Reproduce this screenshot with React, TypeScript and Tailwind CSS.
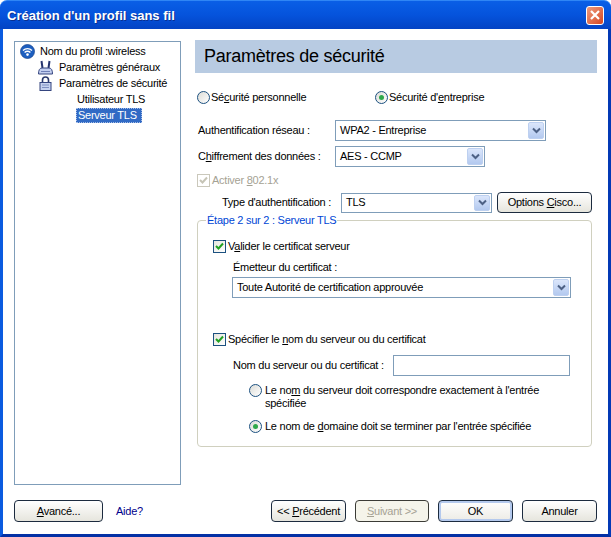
import type { ReactNode } from "react";

function Radio({ on }: { on?: boolean }) {
  return (
    <span className="w-[13px] h-[13px] shrink-0 rounded-full border border-[#1c5180] bg-gradient-to-br from-[#dcdcd7] to-white flex items-center justify-center">
      {on && <span className="w-[5px] h-[5px] rounded-full bg-[#2fa84a]" />}
    </span>
  );
}

function Check({ disabled }: { disabled?: boolean }) {
  return (
    <span className={`w-[13px] h-[13px] shrink-0 border flex items-center justify-center ${disabled ? "border-[#cac8bb] bg-white" : "border-[#1c5180] bg-gradient-to-br from-[#e6e6de] to-white"}`}>
      <svg width="9" height="9" viewBox="0 0 9 9">
        <path d="M1 4 L3.5 6.5 L8 1.5" fill="none" stroke={disabled ? "#c6c4b6" : "#21a121"} strokeWidth="2" />
      </svg>
    </span>
  );
}

function Select({ value, className }: { value: string; className: string }) {
  return (
    <div className={`flex items-center justify-between border border-[#7f9db9] bg-white pl-[3px] pr-[1px] ${className}`}>
      <span className="pl-[1px]">{value}</span>
      <span className="w-[16px] h-[calc(100%-2px)] rounded-[2px] border border-[#bdd0f0] bg-gradient-to-b from-[#dbe6fb] to-[#b3c9ef] flex items-center justify-center">
        <svg width="9" height="7" viewBox="0 0 9 7">
          <path d="M1 1.5 L4.5 5 L8 1.5" fill="none" stroke="#4d6185" strokeWidth="2" />
        </svg>
      </span>
    </div>
  );
}

function Btn({ children, className, state }: { children: ReactNode; className: string; state?: "off" | "def" }) {
  const look =
    state === "off"
      ? "text-[#a5a294] bg-[#f5f4ea] border-[#3b3b36]"
      : state === "def"
        ? "border-[#1c2b3f] bg-gradient-to-b from-white to-[#ecebe5] shadow-[inset_0_0_0_2px_#b4c9ed]"
        : "border-[#1c2b3f] bg-gradient-to-b from-white to-[#e6e5dd]";
  return <div className={`flex items-center justify-center rounded-[4px] border ${look} ${className}`}>{children}</div>;
}

function WifiIcon() {
  return (
    <svg width="15" height="15" viewBox="0 0 15 15" className="shrink-0">
      <circle cx="7.5" cy="7.5" r="7" fill="#1d5fc0" stroke="#123f8a" strokeWidth="0.7" />
      <path d="M3 6.5 A6.5 6.5 0 0 1 12 6.5 M4.6 8.5 A4 4 0 0 1 10.4 8.5" fill="none" stroke="#fff" strokeWidth="1.3" />
      <circle cx="7.5" cy="10.6" r="1.3" fill="#fff" />
    </svg>
  );
}

function RouterIcon() {
  return (
    <svg width="15" height="15" viewBox="0 0 15 15" className="shrink-0">
      <path d="M3.5 1 L4.5 8 M11.5 1 L10.5 8" stroke="#26346e" strokeWidth="2" />
      <path d="M0.5 14 Q0.5 8 4 8 H11 Q14.5 8 14.5 14 Z" fill="#c3cff0" stroke="#35457f" />
      <path d="M3 11.5 H12" stroke="#6f80b8" />
    </svg>
  );
}

function LockIcon() {
  return (
    <svg width="13" height="15" viewBox="0 0 13 15" className="shrink-0">
      <path d="M3.5 7 V4 Q3.5 1 6.5 1 Q9.5 1 9.5 4 V7" fill="none" stroke="#2b3a6e" strokeWidth="1.6" />
      <rect x="1" y="6.5" width="11" height="8" fill="#c6d2ee" stroke="#35457f" />
      <path d="M3 9 H10 M3 11.5 H10" stroke="#7e8fc0" />
    </svg>
  );
}

export default function App() {
  return (
    <div className="w-[611px] h-[537px] flex flex-col overflow-hidden whitespace-nowrap bg-white text-[11px] leading-[13px] tracking-[-0.25px] text-black font-['Liberation_Sans',sans-serif]">
      {/* Title bar */}
      <div className="h-[29px] shrink-0 rounded-t-[7px] border-t border-[#2f86f5] bg-gradient-to-b from-[#0a5fe6] via-[#0553dc] to-[#0343c4] flex items-center justify-between pl-[7px] pr-[7px]">
        <span className="text-white font-bold text-[13px] tracking-normal [text-shadow:1px_1px_0_#0a2f90]">Création d'un profil sans fil</span>
        <span className="w-[18px] h-[19px] rounded-[3px] border border-white bg-gradient-to-br from-[#ec9a7c] to-[#d5431c] flex items-center justify-center">
          <svg width="12" height="12" viewBox="0 0 12 12">
            <path d="M2 2 L10 10 M10 2 L2 10" stroke="#fff" strokeWidth="2.2" />
          </svg>
        </span>
      </div>

      {/* Window body */}
      <div className="flex-1 min-h-0 flex flex-col border-x-[3px] border-b-[3px] border-l-[#0a5be0] border-r-[#0339b5] border-b-[#0330a5] pl-[11px] pr-[11px]">
        <div className="flex gap-[14px] pt-[12px]">
          {/* Tree */}
          <div className="w-[167px] h-[444px] border border-[#7f9db9] pt-[1px] pl-[5px]">
            <div className="h-[16px] flex items-center gap-[5px]">
              <WifiIcon />
              <span>Nom du profil :wireless</span>
            </div>
            <div className="h-[16px] flex items-center gap-[6px] pl-[18px]">
              <RouterIcon />
              <span>Paramètres généraux</span>
            </div>
            <div className="h-[16px] flex items-center gap-[7px] pl-[19px]">
              <LockIcon />
              <span>Paramètres de sécurité</span>
            </div>
            <div className="h-[16px] flex items-center pl-[57px]">Utilisateur TLS</div>
            <div className="h-[16px] flex items-center pl-[56px]">
              <span className="px-[1px] h-[15px] w-[66px] bg-[#316ac5] text-white border border-dotted border-[#a9bfe6] flex items-center">Serveur TLS</span>
            </div>
          </div>

          {/* Right pane */}
          <div className="w-[402px] -mt-[1px]">
            <div className="h-[33px] bg-[#b8cbe2] flex items-center pl-[9px] text-[18px] tracking-[-0.25px]">Paramètres de sécurité</div>

            <div className="flex mt-[17px] h-[14px] items-center pl-[2px]">
              <div className="w-[178px] flex items-center gap-[1px]">
                <Radio />
                <span>Sé<u>c</u>urité personnelle</span>
              </div>
              <div className="flex items-center gap-[1px]">
                <Radio on />
                <span>Sécurité d'<u>e</u>ntreprise</span>
              </div>
            </div>

            <div className="flex items-center mt-[16px] pl-[3px]">
              <span className="w-[137px]">Authentification réseau :</span>
              <Select value="WPA2 - Entreprise" className="w-[211px] h-[21px]" />
            </div>
            <div className="flex items-center mt-[5px] pl-[3px]">
              <span className="w-[137px]">C<u>h</u>iffrement des données :</span>
              <Select value="AES - CCMP" className="w-[150px] h-[21px]" />
            </div>

            <div className="flex items-center gap-[2px] mt-[7px] pl-[2px] text-[#a5a294]">
              <Check disabled />
              <span>Activer <u>8</u>02.1x</span>
            </div>

            <div className="flex items-center mt-[5px] pl-[27px]">
              <span className="w-[119px]">Type d'authentification :</span>
              <Select value="TLS" className="w-[151px] h-[20px]" />
              <Btn className="w-[95px] h-[21px] ml-[5px]">
                <span>Options <u>C</u>isco...</span>
              </Btn>
            </div>

            {/* Group box */}
            <div className="relative ml-[2px] w-[395px] h-[227px] mt-[7px] border border-[#d0d0bf] rounded-[4px] pl-[15px] pt-[19px]">
              <span className="absolute left-[8px] -top-[7px] bg-white px-[1px] text-[#0046d5]">Étape 2 sur 2 : Serveur TLS</span>
              <div className="flex items-center gap-[2px]">
                <Check />
                <span>V<u>a</u>lider le certificat serveur</span>
              </div>
              <div className="pl-[20px] mt-[8px]">Émetteur du certificat :</div>
              <Select value="Toute Autorité de certification approuvée" className="ml-[19px] mt-[3px] w-[339px] h-[21px]" />
              <div className="flex items-center gap-[2px] mt-[35px]">
                <Check />
                <span>Spécifier le <u>n</u>om du serveur ou du certificat</span>
              </div>
              <div className="flex items-center pl-[20px] mt-[9px]">
                <span className="w-[160px]">Nom du serveur ou du certificat :</span>
                <div className="w-[177px] h-[21px] border border-[#7f9db9] bg-white" />
              </div>
              <div className="flex gap-[3px] pl-[36px] mt-[8px]">
                <Radio />
                <span>
                  Le no<u>m</u> du serveur doit correspondre exactement à l'entrée
                  <br />
                  spécifiée
                </span>
              </div>
              <div className="flex items-center gap-[3px] pl-[36px] mt-[10px]">
                <Radio on />
                <span>Le nom de <u>d</u>omaine doit se terminer par l'entrée spécifiée</span>
              </div>
            </div>
          </div>
        </div>

        {/* Footer */}
        <div className="flex items-center mt-[15px]">
          <Btn className="w-[89px] h-[22px]">
            <span><u>A</u>vancé...</span>
          </Btn>
          <span className="ml-[13px] text-[#00008b]">Aide?</span>
          <div className="ml-auto flex gap-[9px]">
            <Btn className="w-[75px] h-[22px]"><span>&lt;&lt; <u>P</u>récédent</span></Btn>
            <Btn className="w-[74px] h-[22px]" state="off"><span><u>S</u>uivant &gt;&gt;</span></Btn>
            <Btn className="w-[75px] h-[22px]" state="def">OK</Btn>
            <Btn className="w-[75px] h-[22px]">Annuler</Btn>
          </div>
        </div>
      </div>
    </div>
  );
}
